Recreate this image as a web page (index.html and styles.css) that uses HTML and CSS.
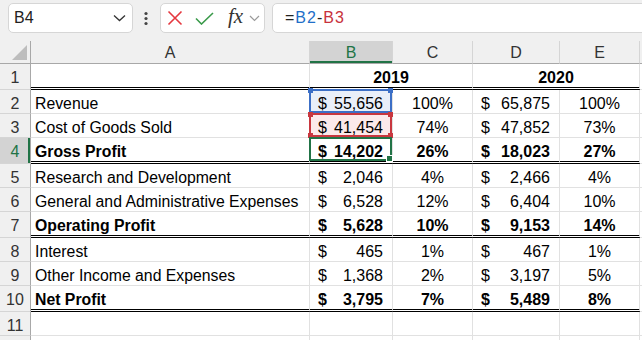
FILE: index.html
```html
<!DOCTYPE html>
<html lang="en">
<head>
    <meta charset="UTF-8">
    <title>Income Statement - Sheet1</title>
    <link rel="stylesheet" href="styles.css">
</head>
<body>
    <div class="formula-bar">
        <div class="name-box">
            <span>B4</span>
            <svg width="13" height="8" viewBox="0 0 13 8"><path d="M1 1.5 L6.5 6.5 L12 1.5" fill="none" stroke="#333" stroke-width="1.3"/></svg>
        </div>
        <svg class="dots" width="4" height="16" viewBox="0 0 4 16">
            <circle cx="2" cy="2.5" r="1.6" fill="#444"/>
            <circle cx="2" cy="7.5" r="1.6" fill="#444"/>
            <circle cx="2" cy="12.5" r="1.6" fill="#444"/>
        </svg>
        <div class="fx-box">
            <svg class="icon-cancel" width="16" height="16" viewBox="0 0 16 16"><path d="M1.5 1.5 L14.5 14.5 M14.5 1.5 L1.5 14.5" stroke="#e5383f" stroke-width="1.6" fill="none"/></svg>
            <svg class="icon-enter" width="19" height="13" viewBox="0 0 19 13"><path d="M1 6.5 L6.5 12 L18 1" stroke="#3a9a4a" stroke-width="1.6" fill="none"/></svg>
            <span class="fx">fx</span>
            <svg class="icon-more" width="11" height="7" viewBox="0 0 11 7"><path d="M1 1 L5.5 5.5 L10 1" stroke="#9a9a9a" stroke-width="1.2" fill="none"/></svg>
        </div>
        <div class="formula-input">=<span class="ref-b2">B2</span>-<span class="ref-b3">B3</span></div>
    </div>

    <div class="sheet">
        <div class="hdr corner">
            <svg width="17" height="17" viewBox="0 0 17 17"><polygon points="16,1 16,16 1,16" fill="#bdbdbd"/></svg>
        </div>
        <div class="hdr">A</div>
        <div class="hdr active">B</div>
        <div class="hdr">C</div>
        <div class="hdr">D</div>
        <div class="hdr">E</div>
        <div class="hdr"></div>

        <div class="row total">
            <div class="rh">1</div>
            <div class="c"></div>
            <div class="c year">2019</div>
            <div class="c year">2020</div>
            <div class="c f"></div>
        </div>

        <div class="row">
            <div class="rh">2</div>
            <div class="c lbl">Revenue</div>
            <div class="c acc ref-blue"><span>$</span><span>55,656</span>
                <i class="frame"><b class="tl"></b><b class="tr"></b></i>
            </div>
            <div class="c pct">100%</div>
            <div class="c acc"><span>$</span><span>65,875</span></div>
            <div class="c pct">100%</div>
            <div class="c f"></div>
        </div>

        <div class="row">
            <div class="rh">3</div>
            <div class="c lbl">Cost of Goods Sold</div>
            <div class="c acc ref-red"><span>$</span><span>41,454</span>
                <i class="frame"><b class="tl"></b><b class="tr"></b><b class="bl"></b><b class="br"></b></i>
            </div>
            <div class="c pct">74%</div>
            <div class="c acc"><span>$</span><span>47,852</span></div>
            <div class="c pct">73%</div>
            <div class="c f"></div>
        </div>

        <div class="row total">
            <div class="rh active">4</div>
            <div class="c lbl">Gross Profit</div>
            <div class="c acc current"><span>$</span><span>14,202</span>
                <i class="frame"><b class="br"></b></i>
            </div>
            <div class="c pct">26%</div>
            <div class="c acc"><span>$</span><span>18,023</span></div>
            <div class="c pct">27%</div>
            <div class="c f"></div>
        </div>

        <div class="row">
            <div class="rh">5</div>
            <div class="c lbl">Research and Development</div>
            <div class="c acc"><span>$</span><span>2,046</span></div>
            <div class="c pct">4%</div>
            <div class="c acc"><span>$</span><span>2,466</span></div>
            <div class="c pct">4%</div>
            <div class="c f"></div>
        </div>

        <div class="row">
            <div class="rh">6</div>
            <div class="c lbl">General and Administrative Expenses</div>
            <div class="c acc"><span>$</span><span>6,528</span></div>
            <div class="c pct">12%</div>
            <div class="c acc"><span>$</span><span>6,404</span></div>
            <div class="c pct">10%</div>
            <div class="c f"></div>
        </div>

        <div class="row total">
            <div class="rh">7</div>
            <div class="c lbl">Operating Profit</div>
            <div class="c acc"><span>$</span><span>5,628</span></div>
            <div class="c pct">10%</div>
            <div class="c acc"><span>$</span><span>9,153</span></div>
            <div class="c pct">14%</div>
            <div class="c f"></div>
        </div>

        <div class="row">
            <div class="rh">8</div>
            <div class="c lbl">Interest</div>
            <div class="c acc"><span>$</span><span>465</span></div>
            <div class="c pct">1%</div>
            <div class="c acc"><span>$</span><span>467</span></div>
            <div class="c pct">1%</div>
            <div class="c f"></div>
        </div>

        <div class="row">
            <div class="rh">9</div>
            <div class="c lbl">Other Income and Expenses</div>
            <div class="c acc"><span>$</span><span>1,368</span></div>
            <div class="c pct">2%</div>
            <div class="c acc"><span>$</span><span>3,197</span></div>
            <div class="c pct">5%</div>
            <div class="c f"></div>
        </div>

        <div class="row total">
            <div class="rh">10</div>
            <div class="c lbl">Net Profit</div>
            <div class="c acc"><span>$</span><span>3,795</span></div>
            <div class="c pct">7%</div>
            <div class="c acc"><span>$</span><span>5,489</span></div>
            <div class="c pct">8%</div>
            <div class="c f"></div>
        </div>

        <div class="row">
            <div class="rh">11</div>
            <div class="c"></div>
            <div class="c"></div>
            <div class="c"></div>
            <div class="c"></div>
            <div class="c"></div>
            <div class="c f"></div>
        </div>

        <div class="row">
            <div class="rh"></div>
            <div class="c"></div>
            <div class="c"></div>
            <div class="c"></div>
            <div class="c"></div>
            <div class="c"></div>
            <div class="c f"></div>
        </div>
    </div>
</body>
</html>
```

FILE: styles.css
```css
:root {
    --chrome: #f0f0f0;
    --grid: #e1e1e1;
    --header-line: #d5d5d5;
    --selected-header: #d3d3d3;
    --excel-green: #217346;
    --ref-blue: #3c6fc6;
    --ref-red: #c8373f;
}

body {
    margin: 0;
    width: 642px;
    height: 340px;
    overflow: hidden;
    background-color: #ffffff;
    font-family: 'Liberation Sans', Arial, sans-serif;
    font-size: 16px;
    color: #000000;
}

/* formula bar */

.formula-bar {
    display: flex;
    align-items: flex-start;
    height: 41px;
    padding: 3px 0 0 8px;
    box-sizing: border-box;
    background-color: var(--chrome);
}

.name-box,
.fx-box,
.formula-input {
    height: 30px;
    box-sizing: border-box;
    background-color: #ffffff;
    border: 1px solid #d6d6d6;
    border-radius: 5px;
    display: flex;
    align-items: center;
}

.name-box {
    width: 125px;
    padding: 0 6px 0 5px;
    justify-content: space-between;
    color: #222222;
}

.dots {
    margin: 8px 12px 0 11px;
}

.fx-box {
    width: 105px;
    padding-left: 6px;
}

.icon-cancel {
    margin-right: 12px;
}

.icon-enter {
    margin-right: 14px;
}

.fx {
    font-family: 'Liberation Serif', 'Times New Roman', serif;
    font-style: italic;
    font-size: 21px;
    color: #333333;
    margin-right: 6px;
    margin-top: -3px;
}

.formula-input {
    flex: 1;
    margin-left: 7px;
    margin-right: -10px;
    padding-left: 12px;
    letter-spacing: 1px;
    color: #222222;
}

.ref-b2 {
    color: #1f6fc8;
}

.ref-b3 {
    color: #c8323c;
}

/* sheet grid */

.sheet {
    display: grid;
    grid-template-columns: 31px 279px 83px 80px 87px 80px 1fr;
    grid-template-rows: 23px 26px 24px 24px 26px 24px 24px 26px 24px 24px 26px 24px 24px;
}

.row {
    display: contents;
}

.hdr {
    background-color: var(--chrome);
    border-right: 1px solid var(--header-line);
    border-bottom: 1px solid #a8a8a8;
    box-sizing: border-box;
    text-align: center;
    line-height: 23px;
    color: #333333;
}

.hdr.corner {
    border-right: 1px solid #a8a8a8;
    display: flex;
    align-items: flex-end;
    justify-content: flex-end;
    padding: 0 2px 2px 0;
}

.hdr.active {
    background-color: var(--selected-header);
    color: var(--excel-green);
    box-shadow: inset 0 -2px var(--excel-green);
}

.rh {
    background-color: var(--chrome);
    border-right: 1px solid #a8a8a8;
    border-bottom: 1px solid var(--header-line);
    box-sizing: border-box;
    text-align: center;
    padding-top: 5px;
    line-height: 18px;
    color: #333333;
}

.rh.active {
    background-color: var(--selected-header);
    color: var(--excel-green);
    box-shadow: inset -2px 0 var(--excel-green);
}

.c {
    position: relative;
    border-right: 1px solid var(--grid);
    border-bottom: 1px solid var(--grid);
    box-sizing: border-box;
    padding: 5px 4px 0 4px;
    line-height: 18px;
    white-space: nowrap;
}

.lbl {
    font-size: 15.8px;
}

.total .c {
    font-weight: bold;
}

.total .c:not(.f) {
    border-bottom: 3px double #000000;
}

.year {
    grid-column: span 2;
    text-align: center;
}

.acc {
    display: flex;
    justify-content: space-between;
    align-items: flex-start;
    padding: 5px 9px 0 8px;
}

.pct {
    text-align: center;
}

/* reference highlights and active cell */

.ref-blue {
    background-color: #e9eff9;
}

.ref-red {
    background-color: #fbe9ea;
}

.frame {
    position: absolute;
    top: -1px;
    left: -1px;
    right: 0;
    bottom: 0;
    border: 2px solid;
    z-index: 1;
}

.ref-blue .frame {
    border-color: var(--ref-blue);
}

.ref-red .frame {
    border-color: var(--ref-red);
}

.current .frame {
    border-color: var(--excel-green);
}

.frame b {
    position: absolute;
    width: 5px;
    height: 5px;
}

.ref-blue .frame b {
    background-color: var(--ref-blue);
}

.ref-red .frame b {
    background-color: var(--ref-red);
}

.current .frame b {
    background-color: var(--excel-green);
    border: 1px solid #ffffff;
}

.frame .tl { top: -3px; left: -3px; }
.frame .tr { top: -3px; right: -3px; }
.frame .bl { bottom: -3px; left: -3px; }
.frame .br { bottom: -3px; right: -3px; }
```
